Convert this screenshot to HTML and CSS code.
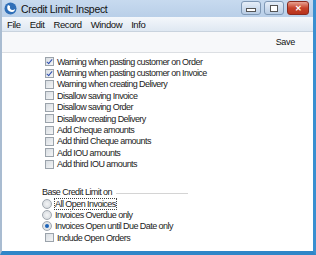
FILE: index.html
```html
<!DOCTYPE html>
<html lang="en">
<head>
  <meta charset="UTF-8">
  <title>Credit Limit: Inspect</title>
  <link rel="stylesheet" href="styles.css">
</head>
<body>
  <div class="window">
    <!-- title bar -->
    <div class="titlebar">
      <svg class="app-icon" width="13" height="13" viewBox="0 0 13 13">
        <circle cx="6.5" cy="6.5" r="6" fill="#2f6fb8"/>
        <path d="M4 3 C2 6 4 10 8 10 C10 10 11 8 11 7 C9 9 5 8 6 4 Z" fill="#fff"/>
      </svg>
      <span class="title">Credit Limit: Inspect</span>
      <div class="win-buttons">
        <span class="wbtn min"><i></i></span>
        <span class="wbtn max"><i></i></span>
        <span class="wbtn close">&#x2715;</span>
      </div>
    </div>

    <!-- menu bar -->
    <div class="menubar">
      <span>File</span>
      <span>Edit</span>
      <span>Record</span>
      <span>Window</span>
      <span>Info</span>
    </div>

    <!-- toolbar -->
    <div class="toolbar">
      <span class="save">Save</span>
    </div>

    <!-- content -->
    <div class="content">
      <div class="options">
        <label class="row"><span class="check checked"></span>Warning when pasting customer on Order</label>
        <label class="row"><span class="check checked"></span>Warning when pasting customer on Invoice</label>
        <label class="row"><span class="check"></span>Warning when creating Delivery</label>
        <label class="row"><span class="check"></span>Disallow saving Invoice</label>
        <label class="row"><span class="check"></span>Disallow saving Order</label>
        <label class="row"><span class="check"></span>Disallow creating Delivery</label>
        <label class="row"><span class="check"></span>Add Cheque amounts</label>
        <label class="row"><span class="check"></span>Add third Cheque amounts</label>
        <label class="row"><span class="check"></span>Add IOU amounts</label>
        <label class="row"><span class="check"></span>Add third IOU amounts</label>
      </div>

      <div class="group">
        <div class="group-title"><span>Base Credit Limit on</span><span class="rule"></span></div>
        <label class="row radio-row"><span class="radio"></span><span class="focus">All Open Invoices</span></label>
        <label class="row radio-row"><span class="radio"></span>Invoices Overdue only</label>
        <label class="row radio-row"><span class="radio on"></span>Invoices Open until Due Date only</label>
        <label class="row"><span class="check"></span>Include Open Orders</label>
      </div>
    </div>
  </div>
</body>
</html>
```

FILE: styles.css
```css
body {
  margin: 0;
  background: #fff;
  font-family: "Liberation Sans", sans-serif;
}
.window {
  width: 316px;
  height: 255px;
  box-sizing: border-box;
  display: flex;
  flex-direction: column;
  border-left: 2px solid #a9bcd1;
  border-right: 3px solid #3a8fd0;
  border-bottom: 4px solid #2f86c8;
  background: #c9dbef;
  overflow: hidden;
}
/* title bar */
.titlebar {
  height: 17px;
  flex: none;
  display: flex;
  align-items: center;
  padding-left: 2px;
  background: linear-gradient(#c7daef, #b9cfe8);
}
.app-icon {
  margin-right: 4px;
}
.title {
  font-size: 10.5px;
  letter-spacing: -0.3px;
  color: #111;
}
.win-buttons {
  margin-left: auto;
  display: flex;
  gap: 3px;
  align-self: flex-start;
  margin-top: 1px;
}
.wbtn {
  width: 20px;
  height: 14px;
  box-sizing: border-box;
  border: 1px solid #7f98b5;
  border-radius: 3px;
  background: linear-gradient(#e6eef8, #b8cce4);
  display: flex;
  align-items: center;
  justify-content: center;
}
.wbtn.min i {
  width: 8px;
  height: 2px;
  margin-top: 4px;
  background: #fff;
  border: 1px solid #555;
}
.wbtn.max i {
  width: 6px;
  height: 5px;
  border: 1px solid #555;
  background: #fff;
}
.wbtn.close {
  width: 22px;
  margin-right: 4px;
  border-color: #8a2a1e;
  background: linear-gradient(#e8a393, #c7432b 50%, #b8321c);
  color: #fff;
  font-size: 8px;
  font-weight: bold;
}
/* menu bar */
.menubar {
  height: 14px;
  flex: none;
  display: flex;
  align-items: center;
  gap: 9px;
  padding-left: 5px;
  background: linear-gradient(#f4f7fb, #dfe8f2);
  border-bottom: 1px solid #c9d3de;
  font-size: 9.5px;
  letter-spacing: -0.4px;
  color: #111;
}
/* toolbar */
.toolbar {
  height: 20px;
  flex: none;
  display: flex;
  align-items: center;
  justify-content: flex-end;
  padding-right: 18px;
  background: #f7f8fa;
  border-bottom: 1px solid #dcdfe3;
  font-size: 9px;
  letter-spacing: -0.3px;
  color: #111;
}
/* content */
.content {
  flex: 1;
  background: #fff;
  padding: 3px 0 0 40px;
  font-size: 9px;
  letter-spacing: -0.55px;
  color: #222;
}
.options {
  padding-left: 3px;
}
.row {
  display: flex;
  align-items: center;
  height: 11.4px;
}
.check {
  width: 9px;
  height: 9px;
  box-sizing: border-box;
  border: 1px solid #9ba3ab;
  background: linear-gradient(135deg, #d8dde2, #f4f5f6);
  margin-right: 3px;
  position: relative;
}
.check.checked::after {
  content: "";
  position: absolute;
  left: 2px;
  top: 0;
  width: 2px;
  height: 5px;
  border: solid #2d4fb0;
  border-width: 0 1.5px 1.5px 0;
  transform: rotate(40deg);
}
.group {
  margin-top: 16px;
}
.group-title {
  display: flex;
  align-items: center;
  height: 12px;
}
.rule {
  width: 72px;
  height: 1px;
  background: #d4d4d4;
  margin-left: 4px;
  margin-top: 3px;
}
.radio {
  width: 10px;
  height: 10px;
  box-sizing: border-box;
  border-radius: 50%;
  border: 1px solid #a1a8b0;
  background: radial-gradient(#f4f5f6, #d0d5da);
  margin-right: 3px;
  position: relative;
}
.radio.on::after {
  content: "";
  position: absolute;
  left: 2px;
  top: 2px;
  width: 4px;
  height: 4px;
  border-radius: 50%;
  background: #1c63b7;
}
.focus {
  outline: 1px dotted #444;
}
.group > .row:last-child {
  padding-left: 3px;
}
```
